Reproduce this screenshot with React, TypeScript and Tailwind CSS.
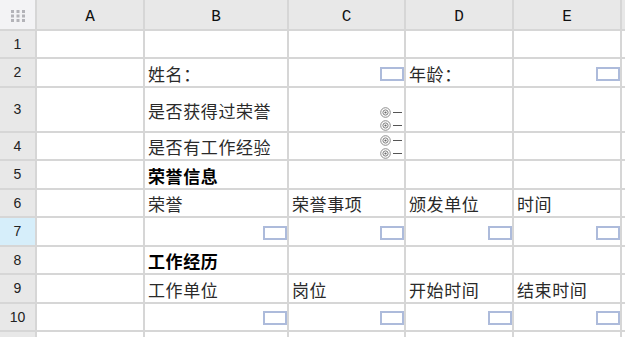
import React from 'react';

const cols = ['A', 'B', 'C', 'D', 'E', ''];
const rowHeights = ['h-[26px]', 'h-[27px]', 'h-[43px]', 'h-[26px]', 'h-[27px]', 'h-[26px]', 'h-[27px]', 'h-[26px]', 'h-[27px]', 'h-[26px]', 'h-[26px]'];

const cjk = { fontFamily: '"Noto Sans CJK SC", "Liberation Sans", sans-serif' };

function InputBox() {
  return <div className="w-[24px] h-[14px] border-2 border-[#adbbdb] bg-white" />;
}

function Radio() {
  return (
    <div className="h-[12px] flex items-center gap-[2px]">
      <svg width="11" height="11" viewBox="0 0 11 11">
        <circle cx="5.5" cy="5.5" r="4.8" fill="none" stroke="#8c8c8c" strokeWidth="1" />
        <circle cx="5.5" cy="5.5" r="2.6" fill="none" stroke="#7c7c7c" strokeWidth="1" />
        <circle cx="5.5" cy="5.5" r="1.1" fill="#666" />
      </svg>
      <div className="w-[9px] h-px bg-[#555]" />
    </div>
  );
}

type Cell = { text?: string; bold?: boolean; box?: boolean; radio?: 'top' | 'bottom' };

const data: Record<string, Cell> = {
  B2: { text: '姓名：' },
  C2: { box: true },
  D2: { text: '年龄：' },
  E2: { box: true },
  B3: { text: '是否获得过荣誉' },
  C3: { radio: 'bottom' },
  B4: { text: '是否有工作经验' },
  C4: { radio: 'top' },
  B5: { text: '荣誉信息', bold: true },
  B6: { text: '荣誉' },
  C6: { text: '荣誉事项' },
  D6: { text: '颁发单位' },
  E6: { text: '时间' },
  B7: { box: true },
  C7: { box: true },
  D7: { box: true },
  E7: { box: true },
  B8: { text: '工作经历', bold: true },
  B9: { text: '工作单位' },
  C9: { text: '岗位' },
  D9: { text: '开始时间' },
  E9: { text: '结束时间' },
  B10: { box: true },
  C10: { box: true },
  D10: { box: true },
  E10: { box: true },
};

function CellView({ id, h }: { id: string; h: string }) {
  const c = data[id];
  if (!c) return <div className={`bg-white ${h}`} />;
  if (c.box) {
    return (
      <div className={`bg-white ${h} flex items-end justify-end pb-[5px]`}>
        <InputBox />
      </div>
    );
  }
  if (c.radio) {
    return (
      <div
        className={`bg-white ${h} flex flex-col items-end pr-[2px] ${
          c.radio === 'bottom' ? 'justify-end gap-[1px]' : 'justify-start pt-[2px] gap-[2px]'
        }`}
      >
        <Radio />
        <Radio />
      </div>
    );
  }
  return (
    <div
      className={`bg-white ${h} flex items-center pl-[3px] pt-[2px] text-[17px] tracking-[0.6px] whitespace-nowrap ${
        c.bold ? 'font-bold text-black' : 'text-[#2a2a2a]'
      }`}
      style={cjk}
    >
      {c.text}
    </div>
  );
}

export default function App() {
  return (
    <div className="w-[625px] h-[337px] overflow-hidden bg-white">
      <div className="grid grid-cols-[35px_106px_142px_115px_106px_106px_1fr] gap-[2px] bg-[#d6d6d6]">
        <div className="h-[29px] bg-[#f3f3f5] flex items-center justify-center pt-[3px]">
          <svg width="16" height="14" viewBox="0 0 16 14">
            {[0, 1, 2].map((r) =>
              [0, 1, 2].map((c) => (
                <rect key={`${r}-${c}`} x={1 + c * 5.5} y={1 + r * 4.5} width="3" height="3" fill="#b3b3b8" />
              ))
            )}
          </svg>
        </div>
        {cols.map((c, i) => (
          <div
            key={i}
            className="h-[29px] bg-[#e8e8e8] flex items-center justify-center pt-[5px] text-[16px] text-[#111]"
            style={{ fontFamily: '"Liberation Mono", monospace' }}
          >
            {c}
          </div>
        ))}
        {rowHeights.map((h, r) => {
          const n = r + 1;
          return (
            <React.Fragment key={n}>
              <div
                className={`${h} flex items-center justify-center text-[14px] text-[#222] ${
                  n === 7 ? 'bg-[#d6eefa]' : 'bg-[#e8e8e8]'
                }`}
                style={{ fontFamily: '"Liberation Sans", sans-serif' }}
              >
                {n <= 10 ? n : null}
              </div>
              {cols.map((c, i) => (
                <CellView key={i} id={c ? `${c}${n}` : `F${n}`} h={h} />
              ))}
            </React.Fragment>
          );
        })}
      </div>
    </div>
  );
}
